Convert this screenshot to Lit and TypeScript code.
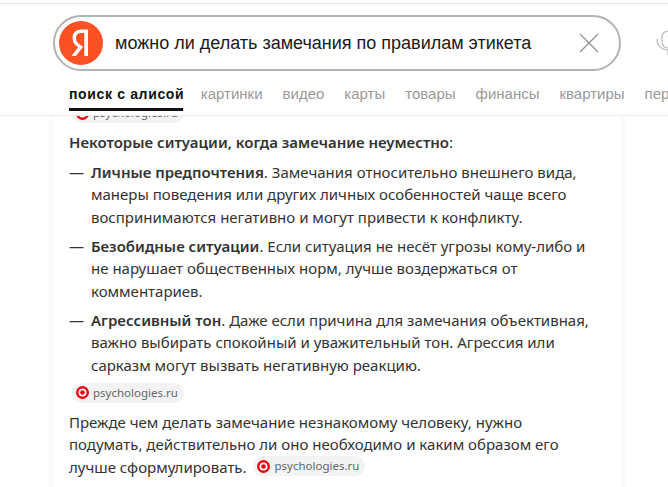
import { LitElement, html, css } from "lit";
import { customElement } from "lit/decorators.js";

const tabs = ["картинки", "видео", "карты", "товары", "финансы", "квартиры", "перевод"];

const chip = () => html`<span class="chip"><svg class="dot" viewBox="0 0 13 13" width="13" height="13"><circle cx="6.500" cy="6.500" r="6.500" fill="#f0000f"/><circle cx="6.500" cy="6.500" r="4" fill="#fff"/><circle cx="6.500" cy="6.500" r="2.300" fill="#f0000f"/></svg>psychologies.ru</span>`;

@customElement("app-root")
export class AppRoot extends LitElement {
  static styles = css`
    :host { display: block; width: 668px; height: 487px; overflow: hidden; background: #fff; font-family: "Noto Sans", sans-serif; color: #333; }
    .header { position: relative; z-index: 2; height: 113px; box-sizing: border-box; border-top: 1px solid #e6e6e6; margin-top: 3px; border-bottom: 1px solid #e8e8e8; background: #fff; display: flex; flex-direction: column; }
    .searchrow { display: flex; align-items: center; margin: 11px 0 0 53px; }
    .search { box-sizing: border-box; width: 568px; height: 56px; border: 2px solid #b3b3b3; border-radius: 28px; display: flex; align-items: center; padding-left: 4px; flex: none; }
    .logo { width: 44px; height: 44px; flex: none; }
    .query { font: 18px "Liberation Sans", Arial, sans-serif; color: #1a1a1a; margin-left: 12px; flex: 1; white-space: nowrap; }
    .close { width: 20px; height: 20px; flex: none; margin-right: 20px; }
    .mic { flex: none; margin-left: 35px; }
    .tabs { display: flex; gap: 20px; margin: 14px 0 0 69px; font: 15px/18px "Liberation Sans", Arial, sans-serif; color: #999; white-space: nowrap; }
    .tab-active { font-size: 14px; font-weight: 700; color: #111; letter-spacing: 0.65px; position: relative; margin-right: -3.500px; }
    .tab-active::after { content: ""; position: absolute; left: 0; right: 1px; top: 23px; height: 3px; background: #111; }
    .card { margin: 0 47px 0 53px; padding: 0 24px 0 16px; height: 400px; box-shadow: 0 0 8px rgba(0, 0, 0, 0.06); font-size: 15px; line-height: 22.500px; color: #333; }
    .content { margin-top: -13px; }
    p { margin: 0; }
    .lead { margin-top: 8px; }
    b { font-weight: 650; }
    ul { list-style: none; margin: 7px 0 0; padding: 0; }
    li { display: flex; margin-bottom: 6.500px; }
    .dash { width: 22px; flex: none; }
    .chip { display: inline-flex; align-items: center; height: 20px; padding: 0 6px 0 4px; border-radius: 10px; background: #f3f3f3; font-size: 11.500px; line-height: 20px; color: #666; gap: 4px; white-space: nowrap; vertical-align: baseline; }
    .after .chip { margin-left: 3px; }
    .block { display: flex; margin: 3px 0 0 3px; }
    .top { display: flex; margin-left: 3px; }
    .after { margin-top: 8px; }
  `;

  render() {
    return html`
      <div class="header">
        <div class="searchrow">
          <div class="search">
            <svg class="logo" viewBox="0 0 44 44"><circle cx="22" cy="22" r="22" fill="#fc5125"/><path d="M29 35h-3.700V11.900h-2.800c-3.700 0-5.500 2-5.500 5 0 3.300 1.300 5 4.600 7.100l2.500 1.700-7.200 9.300H12.500l6.700-8.700c-3.700-2.500-5.700-5-5.700-9.200 0-5.200 3.700-8.600 9-8.600H29z" fill="#fff"/></svg>
            <div class="query">можно ли делать замечания по правилам этикета</div>
            <svg class="close" viewBox="0 0 20 20" fill="none" stroke="#8c8c8c" stroke-width="1.100"><path d="M1 1l18 18M19 1L1 19"/></svg>
          </div>
          <svg class="mic" width="24" height="26" viewBox="0 0 24 26" fill="none" stroke="#b8b8b8" stroke-width="1.200"><rect x="6" y="1" width="12" height="17" rx="6"/><path d="M1 9c0 7 5 11 11 11s11-4 11-11M12 20v5"/></svg>
        </div>
        <div class="tabs">
          <span class="tab-active">поиск с алисой</span>
          ${tabs.map((t) => html`<span>${t}</span>`)}
        </div>
      </div>
      <div class="card">
        <div class="content">
          <div class="top">${chip()}</div>
          <p class="lead"><b>Некоторые ситуации, когда замечание неуместно</b>:</p>
          <ul>
            <li><span class="dash">—</span><span><b>Личные предпочтения</b>. Замечания относительно внешнего вида, манеры поведения или других личных особенностей чаще всего воспринимаются негативно и могут привести к конфликту.</span></li>
            <li><span class="dash">—</span><span><b>Безобидные ситуации</b>. Если ситуация не несёт угрозы кому-либо и не нарушает общественных норм, лучше воздержаться от комментариев.</span></li>
            <li><span class="dash">—</span><span><b>Агрессивный тон</b>. Даже если причина для замечания объективная, важно выбирать спокойный и уважительный тон. Агрессия или сарказм могут вызвать негативную реакцию.</span></li>
          </ul>
          <div class="block">${chip()}</div>
          <p class="after">Прежде чем делать замечание незнакомому человеку, нужно подумать, действительно ли оно необходимо и каким образом его лучше сформулировать. ${chip()}</p>
        </div>
      </div>
    `;
  }
}
